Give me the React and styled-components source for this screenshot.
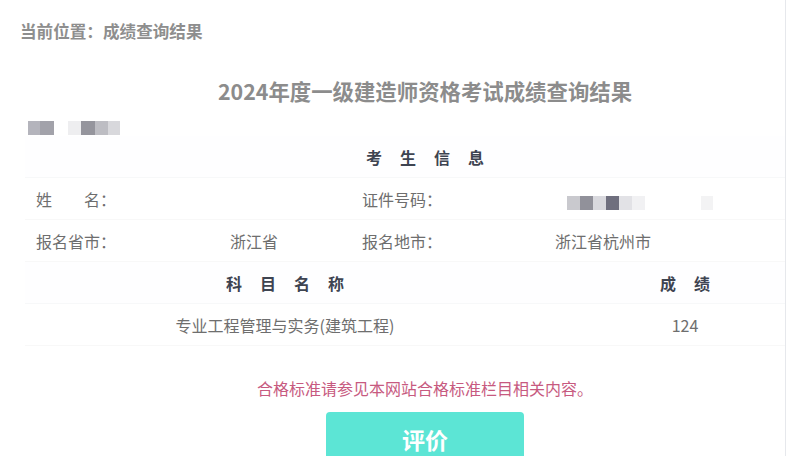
import React from 'react';
import styled, { createGlobalStyle } from 'styled-components';

const GlobalStyle = createGlobalStyle`
    html, body {
        margin: 0;
        padding: 0;
        background: #fff;
    }
    body {
        font-family: "Noto Sans CJK SC", "Noto Sans", "Liberation Sans", sans-serif;
    }
`;

const Page = styled.div`
    width: 786px;
    height: 456px;
    overflow: hidden;
    box-sizing: border-box;
    border-right: 1px solid #e6e8ec;
    background: #fff;
`;

const Breadcrumb = styled.div`
    padding: 22px 0 0 20px;
    font-size: 16.6px;
    line-height: 18px;
    font-weight: 700;
    color: #8e8e8e;
`;

const Panel = styled.div`
    width: 800px;
    margin-left: 25px;
`;

const Title = styled.h1`
    margin: 36px 0 0;
    text-align: center;
    font-size: 21.4px;
    line-height: 30px;
    font-weight: 700;
    color: #8c8c8c;
`;

const Mosaic = styled.div`
    display: flex;
    height: 14px;
    margin: ${(p) => p.$margin || '0'};
`;

const Tile = styled.span`
    display: block;
    width: ${(p) => p.$w || 13}px;
    height: 100%;
    background: ${(p) => p.$c};
`;

const InfoGrid = styled.div`
    display: grid;
    grid-template-columns: 195px 131px 194px 280px;
    margin-top: 1px;
`;

const SectionHead = styled.div`
    grid-column: ${(p) => p.$span || '1 / -1'};
    height: 42px;
    display: flex;
    align-items: center;
    justify-content: center;
    font-size: 16px;
    font-weight: 700;
    letter-spacing: 18px;
    text-indent: 18px;
    color: #3e4451;
    background: #fefeff;
    border-bottom: 1px solid #f7f8f9;
    box-sizing: border-box;
`;

const Cell = styled.div`
    height: 42px;
    display: flex;
    align-items: center;
    padding-left: ${(p) => (p.$label ? 11 : 10)}px;
    font-size: 16px;
    color: #6e6e6e;
    border-bottom: 1px solid #f8f8f8;
    box-sizing: border-box;
`;

const ScoreGrid = styled.div`
    display: grid;
    grid-template-columns: 520px 280px;
`;

const ScoreCell = styled.div`
    height: 42px;
    display: flex;
    align-items: center;
    justify-content: center;
    font-size: 16px;
    color: #6e6e6e;
    border-bottom: 1px solid #f8f8f8;
    box-sizing: border-box;
`;

const Note = styled.p`
    margin: 32px 0 0;
    text-align: center;
    font-size: 16px;
    line-height: 20px;
    color: #c75a80;
`;

const Button = styled.button`
    display: block;
    margin: 14px auto 0;
    width: 198px;
    height: 56px;
    border: none;
    border-radius: 4px;
    background: #5ce5d5;
    color: #fff;
    font-family: inherit;
    font-size: 23px;
    font-weight: 700;
    padding: 0 0 2px;
    cursor: pointer;
`;

const nameMosaic = [
    { c: '#b4b4bc', w: 12 },
    { c: '#a2a2aa', w: 14 },
    { c: '#ffffff', w: 14 },
    { c: '#eeeef0', w: 13 },
    { c: '#95959d', w: 14 },
    { c: '#bdbdc3', w: 13 },
    { c: '#d8d8dc', w: 12 },
];

const idMosaic = [
    { c: '#c9c9ce' },
    { c: '#91919a' },
    { c: '#d9d9de' },
    { c: '#6f6f7e' },
    { c: '#e2e2e6' },
    { c: '#f1f1f3' },
    { c: '#ffffff', w: 56 },
    { c: '#f3f3f4', w: 12 },
];

export default function App() {
    return (
        <>
            <GlobalStyle />
            <Page>
                <Breadcrumb>当前位置：成绩查询结果</Breadcrumb>
                <Panel>
                    <Title>2024年度一级建造师资格考试成绩查询结果</Title>
                    <Mosaic $margin="15px 0 0 3px">
                        {nameMosaic.map((t, i) => <Tile key={i} $c={t.c} $w={t.w} />)}
                    </Mosaic>

                    <InfoGrid>
                        <SectionHead>考生信息</SectionHead>
                        <Cell $label>姓　　名：</Cell>
                        <Cell></Cell>
                        <Cell $label>证件号码：</Cell>
                        <Cell>
                            <Mosaic $margin="9px 0 0 12px">
                                {idMosaic.map((t, i) => <Tile key={i} $c={t.c} $w={t.w} />)}
                            </Mosaic>
                        </Cell>
                        <Cell $label>报名省市：</Cell>
                        <Cell>浙江省</Cell>
                        <Cell $label>报名地市：</Cell>
                        <Cell>浙江省杭州市</Cell>
                    </InfoGrid>

                    <ScoreGrid>
                        <SectionHead $span="auto">科目名称</SectionHead>
                        <SectionHead $span="auto">成绩</SectionHead>
                        <ScoreCell>专业工程管理与实务(建筑工程)</ScoreCell>
                        <ScoreCell>124</ScoreCell>
                    </ScoreGrid>

                    <Note>合格标准请参见本网站合格标准栏目相关内容。</Note>
                    <Button>评价</Button>
                </Panel>
            </Page>
        </>
    );
}
